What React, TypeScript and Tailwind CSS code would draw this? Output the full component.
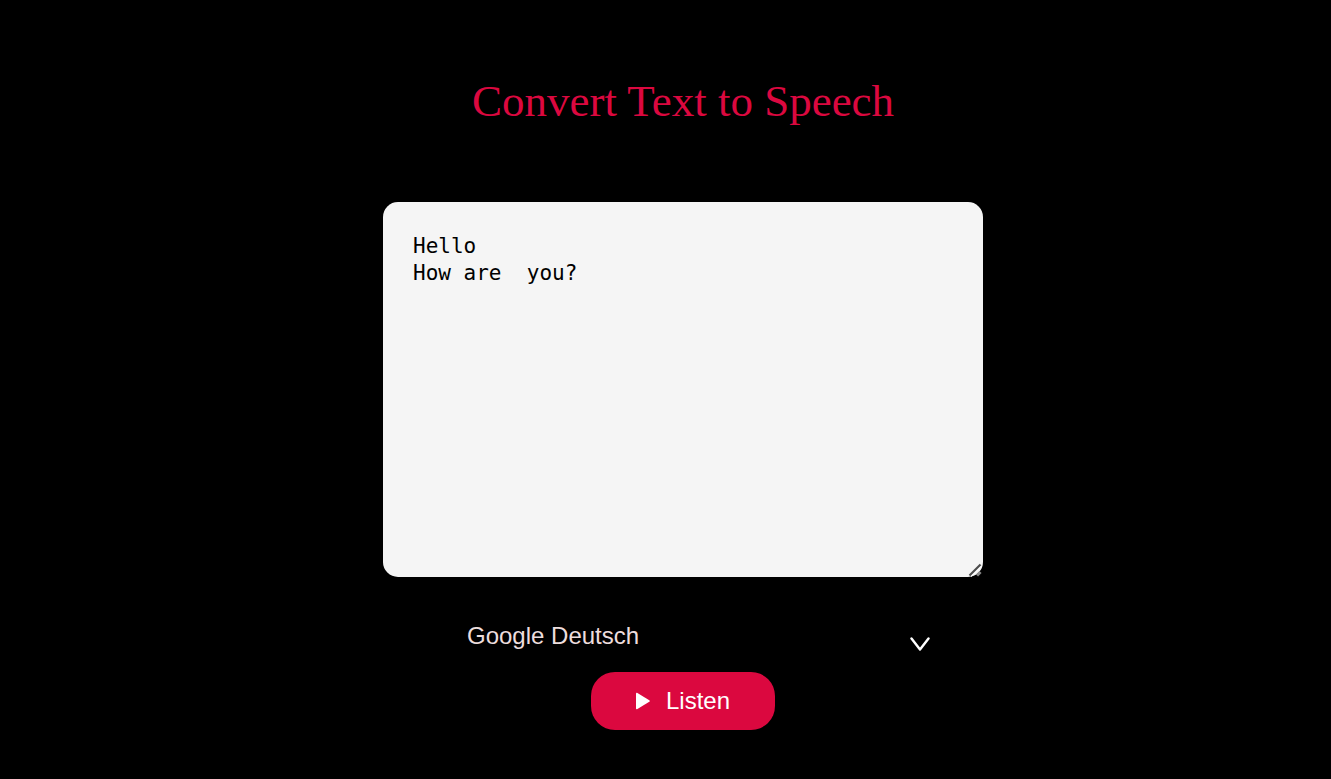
export default function App() {
  return (
    <main className="flex min-h-screen flex-col items-center bg-black pt-[75px] pl-[35px] font-['Liberation_Sans',sans-serif]">
      <h1 className="font-['Liberation_Serif',serif] text-[45px] leading-[52px] text-[#db083f]">
        Convert Text to Speech
      </h1>
      <div className="relative mt-[75px] max-w-full">
        <textarea
          aria-label="Text to speak"
          defaultValue={'Hello\nHow are  you?'}
          className="block h-[375px] w-[600px] max-w-full resize rounded-[15px] bg-[#f5f5f5] px-[30px] pt-[31px] pb-[30px] font-['DejaVu_Sans_Mono',monospace] text-[21px] leading-[27px] text-black outline-none [&::-webkit-resizer]:bg-transparent"
        />
        <svg aria-hidden="true" viewBox="0 0 16 16" className="pointer-events-none absolute right-0 bottom-0 size-4" fill="none">
          <path d="M3.5 15 14 4.5" stroke="white" strokeWidth="2.5" />
          <path d="M2.5 14.5 13.5 3.5" stroke="#4c4c4c" strokeWidth="2.2" />
          <path d="M10 14.5 13.5 11" stroke="#8a8a8a" strokeWidth="3" />
        </svg>
      </div>
      <div className="mt-[29px] flex w-[494px] max-w-full items-center">
        <select
          aria-label="Voice"
          className="h-[60px] w-full appearance-none bg-transparent pl-[31px] text-2xl text-[#eddddd] outline-none"
        >
          <option>Google Deutsch</option>
        </select>
        <svg aria-hidden="true" viewBox="0 0 20 16" className="mt-4 h-4 w-5 shrink-0" fill="none" stroke="white" strokeWidth="2.4" strokeLinecap="round" strokeLinejoin="round">
          <path d="M1.5 2.5 10 13.5 18.5 2.5" />
        </svg>
      </div>
      <button type="button" className="mt-[6px] flex h-[58px] w-[184px] items-center justify-center gap-4 rounded-[24px] bg-[#db083f] text-2xl text-white">
        <svg aria-hidden="true" viewBox="0 0 14 18" className="h-[18px] w-[14px]" fill="white">
          <path d="M0 1.5Q0 .6 1 .8L13.3 8.2Q14.4 9 13.3 9.8L1 17.2Q0 17.4 0 16.5Z" />
        </svg>
        Listen
      </button>
    </main>
  )
}
